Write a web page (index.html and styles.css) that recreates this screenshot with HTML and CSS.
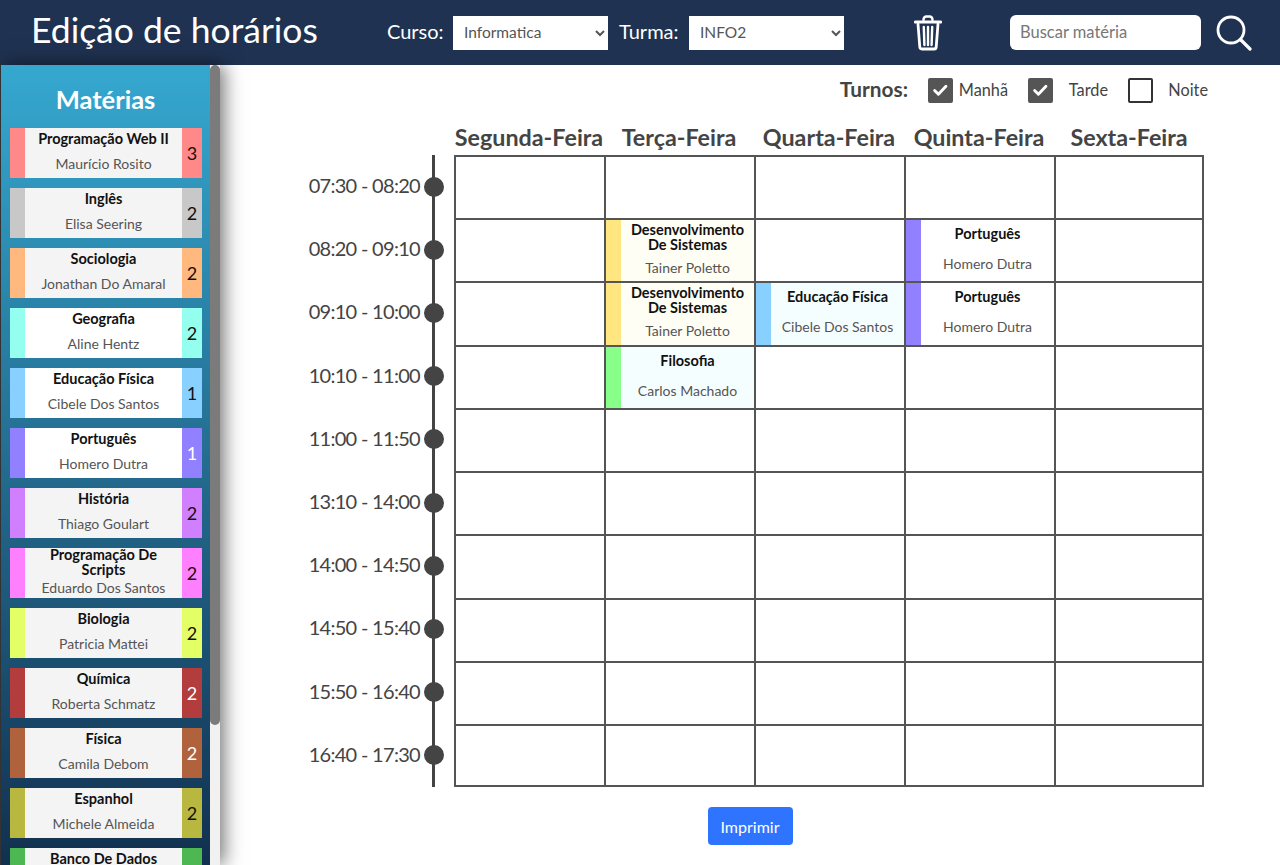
FILE: index.html
```html
<!DOCTYPE html>
<html>
<head>
	<meta charset="utf-8"/>
	<title>Edição de horários</title>
	<link rel="stylesheet" href="styles.css">
</head>
<body>

	<header class="topo">
		<h1 class="titulo">Edição de horários</h1>
		<label class="campo campo_curso"><span>Curso:</span>
			<select><option>Informatica</option></select>
		</label>
		<label class="campo campo_turma"><span>Turma:</span>
			<select><option>INFO2</option></select>
		</label>
		<svg class="lixeira" viewBox="0 0 28 36" fill="none" stroke="#fff" stroke-linecap="round" stroke-linejoin="round">
			<path d="M1.500 7h25" stroke-width="3.200"/>
			<path d="M9.500 5q0-3.200 2.500-3.500h4q2.500 .3 2.500 3.500" stroke-width="2.400"/>
			<path d="M4 9l1.800 23q.2 2 2 2h12.400q1.800 0 2-2L24 9" stroke-width="2.800"/>
			<path d="M9.800 12l.6 18M14 12v18M18.200 12l-.6 18" stroke-width="2.400"/>
		</svg>
		<input class="busca" type="text" placeholder="Buscar matéria"/>
		<svg class="lupa" viewBox="0 0 36 36" fill="none" stroke="#fff" stroke-linecap="round">
			<circle cx="15" cy="15" r="13" stroke-width="2.800"/>
			<path d="M25 25l9 9" stroke-width="3.200"/>
		</svg>
	</header>

	<div class="corpo">
		<aside class="lateral">
			<div class="lista">
				<h2 class="lateral_titulo">Matérias</h2>

				<div class="materia">
					<span class="cor c_vermelho"></span>
					<div class="materia_info"><b>Programação Web II</b><span>Maurício Rosito</span></div>
					<span class="cor c_vermelho qtd">3</span>
				</div>
				<div class="materia">
					<span class="cor c_cinza"></span>
					<div class="materia_info"><b>Inglês</b><span>Elisa Seering</span></div>
					<span class="cor c_cinza qtd">2</span>
				</div>
				<div class="materia">
					<span class="cor c_laranja"></span>
					<div class="materia_info"><b>Sociologia</b><span>Jonathan Do Amaral</span></div>
					<span class="cor c_laranja qtd">2</span>
				</div>
				<div class="materia branca">
					<span class="cor c_agua"></span>
					<div class="materia_info"><b>Geografia</b><span>Aline Hentz</span></div>
					<span class="cor c_agua qtd">2</span>
				</div>
				<div class="materia branca">
					<span class="cor c_azul"></span>
					<div class="materia_info"><b>Educação Física</b><span>Cibele Dos Santos</span></div>
					<span class="cor c_azul qtd">1</span>
				</div>
				<div class="materia branca">
					<span class="cor c_roxo"></span>
					<div class="materia_info"><b>Português</b><span>Homero Dutra</span></div>
					<span class="cor c_roxo qtd claro">1</span>
				</div>
				<div class="materia">
					<span class="cor c_lilas"></span>
					<div class="materia_info"><b>História</b><span>Thiago Goulart</span></div>
					<span class="cor c_lilas qtd">2</span>
				</div>
				<div class="materia">
					<span class="cor c_rosa"></span>
					<div class="materia_info longa"><b>Programação De Scripts</b><span>Eduardo Dos Santos</span></div>
					<span class="cor c_rosa qtd">2</span>
				</div>
				<div class="materia">
					<span class="cor c_lima"></span>
					<div class="materia_info"><b>Biologia</b><span>Patricia Mattei</span></div>
					<span class="cor c_lima qtd">2</span>
				</div>
				<div class="materia">
					<span class="cor c_tijolo"></span>
					<div class="materia_info"><b>Química</b><span>Roberta Schmatz</span></div>
					<span class="cor c_tijolo qtd claro">2</span>
				</div>
				<div class="materia">
					<span class="cor c_marrom"></span>
					<div class="materia_info"><b>Física</b><span>Camila Debom</span></div>
					<span class="cor c_marrom qtd claro">2</span>
				</div>
				<div class="materia">
					<span class="cor c_oliva"></span>
					<div class="materia_info"><b>Espanhol</b><span>Michele Almeida</span></div>
					<span class="cor c_oliva qtd">2</span>
				</div>
				<div class="materia">
					<span class="cor c_verde"></span>
					<div class="materia_info"><b>Banco De Dados</b><span>Tainer Poletto</span></div>
					<span class="cor c_verde qtd">2</span>
				</div>
			</div>
			<div class="rolagem"><div class="rolagem_barra"></div></div>
		</aside>

		<main class="conteudo">
			<div class="turnos">
				<b class="turnos_titulo">Turnos:</b>
				<label class="turno"><span class="caixa marcada"><svg viewBox="0 0 25 25" fill="none" stroke="#fff" stroke-width="3.400" stroke-linecap="round" stroke-linejoin="round"><path d="M5.500 12.500l4.500 4.500 9-9.500"/></svg></span><span class="turno_nome">Manhã</span></label>
				<label class="turno"><span class="caixa marcada"><svg viewBox="0 0 25 25" fill="none" stroke="#fff" stroke-width="3.400" stroke-linecap="round" stroke-linejoin="round"><path d="M5.500 12.500l4.500 4.500 9-9.500"/></svg></span><span class="turno_nome">Tarde</span></label>
				<label class="turno"><span class="caixa"></span><span class="turno_nome">Noite</span></label>
			</div>

			<div class="dias">
				<span>Segunda-Feira</span>
				<span>Terça-Feira</span>
				<span>Quarta-Feira</span>
				<span>Quinta-Feira</span>
				<span>Sexta-Feira</span>
			</div>

			<div class="grade">
				<div class="horarios">
					<div class="horario"><span>07:30 - 08:20</span><i></i></div>
					<div class="horario"><span>08:20 - 09:10</span><i></i></div>
					<div class="horario"><span>09:10 - 10:00</span><i></i></div>
					<div class="horario"><span>10:10 - 11:00</span><i></i></div>
					<div class="horario"><span>11:00 - 11:50</span><i></i></div>
					<div class="horario"><span>13:10 - 14:00</span><i></i></div>
					<div class="horario"><span>14:00 - 14:50</span><i></i></div>
					<div class="horario"><span>14:50 - 15:40</span><i></i></div>
					<div class="horario"><span>15:50 - 16:40</span><i></i></div>
					<div class="horario"><span>16:40 - 17:30</span><i></i></div>
				</div>

				<table class="tabela">
					<tr><td></td><td></td><td></td><td></td><td></td></tr>
					<tr>
						<td></td>
						<td><div class="aula t_amarelo"><span class="cor c_amarelo"></span><div class="aula_info longa"><b>Desenvolvimento De Sistemas</b><span>Tainer Poletto</span></div></div></td>
						<td></td>
						<td><div class="aula"><span class="cor c_roxo"></span><div class="aula_info"><b>Português</b><span>Homero Dutra</span></div></div></td>
						<td></td>
					</tr>
					<tr>
						<td></td>
						<td><div class="aula t_amarelo"><span class="cor c_amarelo"></span><div class="aula_info longa"><b>Desenvolvimento De Sistemas</b><span>Tainer Poletto</span></div></div></td>
						<td><div class="aula t_azul"><span class="cor c_azul"></span><div class="aula_info"><b>Educação Física</b><span>Cibele Dos Santos</span></div></div></td>
						<td><div class="aula"><span class="cor c_roxo"></span><div class="aula_info"><b>Português</b><span>Homero Dutra</span></div></div></td>
						<td></td>
					</tr>
					<tr>
						<td></td>
						<td><div class="aula t_azul"><span class="cor c_grama"></span><div class="aula_info"><b>Filosofia</b><span>Carlos Machado</span></div></div></td>
						<td></td><td></td><td></td>
					</tr>
					<tr><td></td><td></td><td></td><td></td><td></td></tr>
					<tr><td></td><td></td><td></td><td></td><td></td></tr>
					<tr><td></td><td></td><td></td><td></td><td></td></tr>
					<tr><td></td><td></td><td></td><td></td><td></td></tr>
					<tr><td></td><td></td><td></td><td></td><td></td></tr>
					<tr class="ultima"><td></td><td></td><td></td><td></td><td></td></tr>
				</table>
			</div>

			<div class="acoes">
				<button class="imprimir">Imprimir</button>
			</div>
		</main>
	</div>

</body>
</html>
```

FILE: styles.css
```css
*{
	margin:0;padding:0;
	box-sizing:border-box;
}
html,body{
	height:100%;
	overflow:hidden;
}
body{
	font-family:"Lato","Noto Sans",sans-serif;
	background:white;
	color:#444;
}

/* topo */
.topo{
	height:65px;
	background:#1f3251;
	display:flex;
	align-items:center;
	color:white;
}
.titulo{
	font-size:35.500px;
	font-weight:400;
	margin:0 0 7px 31px;
	width:356px;
	white-space:nowrap;
}
.campo{
	display:flex;
	align-items:center;
	font-size:20px;
	white-space:nowrap;
}
.campo span{margin-bottom:3px;}
.campo select{
	width:155px;
	height:34px;
	border:0;
	border-radius:0;
	background:white;
	color:#555;
	font-family:inherit;
	font-size:15.500px;
	padding:0 0 2px 7px;
}
.campo_curso span{width:66px;}
.campo_turma{margin-left:11px;}
.campo_turma span{width:70px;}
.lixeira{
	width:28px;
	height:36px;
	margin-left:70px;
}
.busca{
	width:191px;
	height:35px;
	margin-left:68px;
	border:0;
	border-radius:6px;
	padding:0 0 2px 10px;
	font-family:inherit;
	font-size:16.500px;
}
.busca::placeholder{color:#777;}
.lupa{
	width:36px;
	height:36px;
	margin-left:15px;
}

/* lateral */
.corpo{
	display:flex;
	height:800px;
}
.lateral{
	display:flex;
	width:220px;
	flex-shrink:0;
	border-left:1px solid #333;
	box-shadow:4px 0 18px rgba(0,0,0,0.55);
	position:relative;
}
.lista{
	flex:1;
	min-width:0;
	overflow:hidden;
	padding-left:9px;
	background:linear-gradient(#35a8d0,#12304f);
}
.rolagem{
	width:10px;
	background:#f1f1f1;
}
.rolagem_barra{
	height:660px;
	background:#7b7b7b;
	border-radius:5px;
}
.lateral_titulo{
	height:63px;
	line-height:68px;
	padding-right:9px;
	text-align:center;
	font-size:25.500px;
	color:white;
}
.materia{
	display:flex;
	width:192px;
	height:50px;
	margin-bottom:10px;
	background:#f4f4f4;
}
.materia.branca{background:white;}
.cor{
	width:15px;
	flex-shrink:0;
}
.qtd{
	width:20px;
	text-align:center;
	line-height:50px;
	font-size:18px;
	color:#111;
}
.qtd.claro{color:white;}
.materia_info{
	flex:1;
	min-width:0;
	padding:0 6px;
	text-align:center;
	display:flex;
	flex-direction:column;
}
.materia_info b{
	font-size:14.500px;
	line-height:15px;
	color:#111;
	margin:3px 0 9px;
}
.materia_info span{
	font-size:14px;
	line-height:18px;
	color:#555;
	white-space:nowrap;
}
.materia_info.longa b{margin:-1px 0 2px;}

.c_vermelho{background:#ff8888;}
.c_cinza{background:#c8c8c8;}
.c_laranja{background:#ffb97f;}
.c_agua{background:#94ffee;}
.c_azul{background:#88d0ff;}
.c_roxo{background:#9180ff;}
.c_lilas{background:#d080ff;}
.c_rosa{background:#ff80ff;}
.c_lima{background:#e4ff66;}
.c_tijolo{background:#b33c3c;}
.c_marrom{background:#b0623d;}
.c_oliva{background:#b8b840;}
.c_verde{background:#4db852;}
.c_amarelo{background:#ffe680;}
.c_grama{background:#88ff88;}

/* conteudo */
.conteudo{
	flex:1;
	padding-top:13px;
}
.turnos{
	display:flex;
	justify-content:flex-end;
	align-items:center;
	height:25px;
	padding-right:72px;
}
.turnos_titulo{
	font-size:20.800px;
	margin:0 20px 4px 0;
}
.turno{
	display:flex;
	align-items:center;
	width:100px;
	font-size:16.300px;
}
.turno:last-child{width:80px;}
.caixa{
	width:25px;
	height:25px;
	border:2px solid #333;
	border-radius:2px;
	flex-shrink:0;
}
.caixa.marcada{
	background:#555;
	border-color:#555;
}
.caixa svg{
	display:block;
	width:21px;
	height:21px;
}
.turno_nome{
	width:55px;
	margin-bottom:3px;
	text-align:right;
	color:#444;
}
.dias{
	display:grid;
	grid-template-columns:repeat(5,150px);
	margin:17px 0 0 234px;
	height:35px;
	line-height:35px;
	text-align:center;
	font-size:23.300px;
	font-weight:700;
	white-space:nowrap;
}
.grade{
	display:flex;
	margin-left:74px;
}
.horarios{
	width:150px;
	height:632px;
	margin-right:10px;
	position:relative;
}
.horarios:before{
	content:"";
	position:absolute;
	right:9px;
	top:0;
	bottom:0;
	width:3px;
	background:#444;
}
.horario{
	height:63.200px;
	display:flex;
	align-items:center;
	justify-content:flex-end;
	font-size:20px;
	letter-spacing:-0.700px;
	white-space:nowrap;
}
.horario span{margin-bottom:3px;}
.horario i{
	width:20px;
	height:20px;
	border-radius:50%;
	background:#444;
	margin-left:4px;
	position:relative;
}
.tabela{
	width:750px;
	table-layout:fixed;
	border-collapse:collapse;
}
.tabela tr{height:63.200px;}
.tabela tr.ultima{height:61px;}
.tabela td{
	border:2px solid #555;
	padding:0;
	width:150px;
	overflow:hidden;
}
.tabela td:last-child{width:auto;}
.aula{
	display:flex;
	min-height:62.200px;
	margin-bottom:-1px;
}
.t_amarelo{background:#fffef5;}
.t_azul{background:#f5feff;}
.aula_info{
	flex:1;
	min-width:0;
	padding:0 6px;
	text-align:center;
	display:flex;
	flex-direction:column;
}
.aula_info b{
	font-size:14.500px;
	line-height:15px;
	color:#111;
	margin:6px 0 14px;
}
.aula_info span{
	font-size:14px;
	line-height:18px;
	color:#555;
	white-space:nowrap;
}
.aula_info.longa b{margin:2px 0 7px;}
.acoes{
	display:flex;
	justify-content:center;
	margin-top:20px;
}
.imprimir{
	width:85px;
	height:38px;
	border:0;
	border-radius:4px;
	background:#2f74ff;
	color:white;
	font-family:inherit;
	font-size:16px;
}
```
